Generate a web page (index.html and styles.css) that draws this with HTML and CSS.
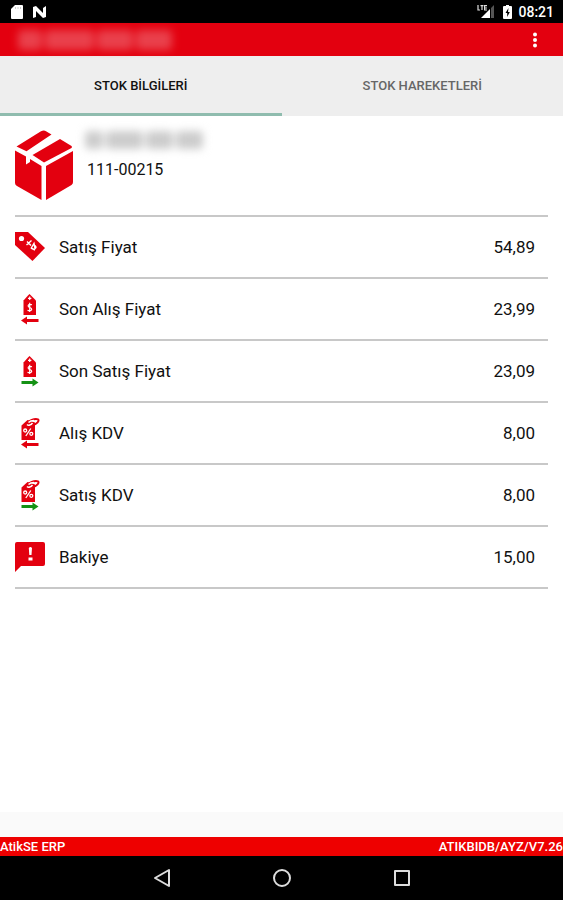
FILE: index.html
```html
<!DOCTYPE html>
<html lang="tr">
<head>
<meta charset="utf-8">
<meta name="viewport" content="width=device-width, initial-scale=1">
<title>Stok Bilgileri</title>
<link rel="stylesheet" href="styles.css">
</head>
<body>
<svg class="defs" aria-hidden="true">
  <symbol id="price-tag" viewBox="0 0 30 32">
    <path fill="#e3000f" d="M8.500 7.500 13 2.500 14.500 1l1.500 1.500 5 5V22h-12.500z"/>
    <path d="M14.700 3.500v3.600M13 5.300h3.400" stroke="#fff" stroke-width="1.200"/>
    <path d="M17 11.800c-4-1.300-5 1.700-2.300 2.700 3.200 1 2.500 4-2.200 2.800M14.700 9.800v9.200" fill="none" stroke="#fff" stroke-width="1.200"/>
  </symbol>
  <symbol id="tax-tag" viewBox="0 0 30 32">
    <path fill="#e3000f" d="M6.500 8.500 12.500 3l7.500 2.500V23H6.500z"/>
    <path d="M12 7c1-3.500 8-6 11-4.700 1.800 1.200-1 5-5.500 5.700" fill="none" stroke="#e3000f" stroke-width="2"/>
    <path d="M12 7.500c1.500 1.500 4 .5 5.500-1.500M13.500 5.500c1.500-1.500 3.500-2 5.500-2" fill="none" stroke="#fff" stroke-width="1.500"/>
    <circle cx="10.200" cy="13.500" r="1.500" fill="none" stroke="#fff" stroke-width="1.300"/>
    <circle cx="16.300" cy="16.800" r="1.500" fill="none" stroke="#fff" stroke-width="1.300"/>
    <path d="m15.800 11.500-5 7.500" stroke="#fff" stroke-width="1.300"/>
  </symbol>
  <symbol id="arrow-in" viewBox="0 0 30 32">
    <path fill="#e3000f" d="m6 27.500 6-4v2.500h11.500v3H12v2.500z"/>
  </symbol>
  <symbol id="arrow-out" viewBox="0 0 30 32">
    <path fill="#159215" d="m23.500 27.500-6-4v2.500H6.500v3h11v2.500z"/>
  </symbol>
</svg>

<header>
  <div class="status-bar">
    <svg width="14" height="16" viewBox="0 0 14 16" aria-hidden="true"><path fill="#fff" d="M5 1h7q1 0 1 1v12q0 1-1 1H2q-1 0-1-1V5z"/><path d="M5.500 3v2M8 3v2M10.500 3v2" stroke="#ccc"/></svg>
    <svg class="n-icon" width="16" height="14" viewBox="0 0 16 14" aria-hidden="true"><path fill="#fff" d="M1 13V2l3-1 7 7V3l3-2v11l-3 1-7-7v6z"/></svg>
    <span class="spacer"></span>
    <svg width="18" height="16" viewBox="0 0 18 16" aria-hidden="true"><path d="M1 1v5h2M3.500 1.600h3M5 1v5M10 1.600H7.600V6H10M8 4h2" fill="none" stroke="#ddd" stroke-width="1.200"/><path fill="#fff" d="M13 5v9H4z"/><path fill="#555" d="m14 4 3-3v13h-3z"/></svg>
    <svg class="battery" width="9" height="16" viewBox="0 0 9 16" aria-hidden="true"><path fill="#fff" d="M3 1h3v1h2q1 0 1 1v11q0 1-1 1H1q-1 0-1-1V3q0-1 1-1h2z"/><path fill="#000" d="M5.500 4 2.500 9h1.700v4L6.800 8H5z"/></svg>
    <time>08:21</time>
  </div>
  <div class="app-bar">
    <div class="masked masked-title"><i></i><i></i><i></i><i></i></div>
    <button class="more" aria-label="Menü"><svg width="6" height="18" viewBox="0 0 6 18"><g fill="#fff"><circle cx="3" cy="3.500" r="2"/><circle cx="3" cy="9" r="2"/><circle cx="3" cy="14.500" r="2"/></g></svg></button>
  </div>
  <nav class="tabs">
    <button class="tab active">STOK BİLGİLERİ</button>
    <button class="tab">STOK HAREKETLERİ</button>
  </nav>
</header>

<main>
  <section class="product">
    <svg width="60" height="72" viewBox="0 0 60 72" aria-hidden="true">
      <g fill="#e3000f">
        <path d="M1.500 17.500 26 2.300q3-1.800 5 0l5.500 3.200-25 16.700z"/>
        <path d="m45 10 11.500 7q1 1 0 2L29 33.500 17.500 26z"/>
        <path d="M0 21.500 11 27.500v8l4-2.500v-3L26.500 37v34L2 57Q0 56 0 54z"/>
        <path d="M31 37 58 22v31q0 2-1.500 3L31 71z"/>
      </g>
    </svg>
    <div class="product-text">
      <div class="masked masked-name"><i></i><i></i><i></i><i></i></div>
      <div class="code">111-00215</div>
    </div>
  </section>

  <dl class="rows">
    <div class="row">
      <dt><svg width="30" height="32" viewBox="0 0 30 32" aria-hidden="true"><path fill="#e3000f" d="M0 1h13l17 16-12.500 13L0 14z"/><circle cx="6.500" cy="7.500" r="2.600" fill="#fff"/><path d="m11.500 14 5-4.500M12 10.500l4 4M16 17.500l3-5 1 5q2-1 0-3M16 17l4 2" fill="none" stroke="#fff" stroke-width="1.400"/></svg>Satış Fiyat</dt>
      <dd>54,89</dd>
    </div>
    <div class="row">
      <dt><svg width="30" height="32" aria-hidden="true"><use href="#price-tag"/><use href="#arrow-in"/></svg>Son Alış Fiyat</dt>
      <dd>23,99</dd>
    </div>
    <div class="row">
      <dt><svg width="30" height="32" aria-hidden="true"><use href="#price-tag"/><use href="#arrow-out"/></svg>Son Satış Fiyat</dt>
      <dd>23,09</dd>
    </div>
    <div class="row">
      <dt><svg width="30" height="32" aria-hidden="true"><use href="#tax-tag"/><use href="#arrow-in"/></svg>Alış KDV</dt>
      <dd>8,00</dd>
    </div>
    <div class="row">
      <dt><svg width="30" height="32" aria-hidden="true"><use href="#tax-tag"/><use href="#arrow-out"/></svg>Satış KDV</dt>
      <dd>8,00</dd>
    </div>
    <div class="row">
      <dt><svg width="30" height="32" viewBox="0 0 30 32" aria-hidden="true"><path fill="#e3000f" d="M2 1h26q2 0 2 2v20q0 2-2 2H6l-6 6V3q0-2 2-2z"/><path fill="#fff" d="M13.800 7q1.700-2 3.200 0l-.5 7h-2.200zM13.500 16.500h4v3h-4z"/></svg>Bakiye</dt>
      <dd>15,00</dd>
    </div>
  </dl>
</main>

<footer>
  <div class="strip"></div>
  <div class="info"><span>AtikSE ERP</span><span>ATIKBIDB/AYZ/V7.26</span></div>
  <nav class="nav-bar">
    <button aria-label="Geri"><svg width="20" height="20" viewBox="0 0 20 20"><path d="M17 2v16L3 10z"/></svg></button>
    <button aria-label="Ana ekran"><svg width="20" height="20" viewBox="0 0 20 20"><circle cx="10" cy="10" r="8"/></svg></button>
    <button aria-label="Son uygulamalar"><svg width="20" height="20" viewBox="0 0 20 20"><path d="M3 3h14v14H3z"/></svg></button>
  </nav>
</footer>
</body>
</html>
```
FILE: styles.css
```css
* { box-sizing: border-box; }

body {
  margin: 0;
  min-height: 100vh;
  display: flex;
  flex-direction: column;
  background: #fff;
  color: #111;
  font: 17px/24px Roboto, sans-serif;
}

button {
  padding: 0;
  border: 0;
  background: none;
  color: inherit;
  font: inherit;
}

svg { display: block; flex: none; }
.defs { position: absolute; width: 0; height: 0; }

.status-bar {
  display: flex;
  align-items: center;
  height: 23px;
  padding: 0 9px 0 10px;
  background: #000;
  color: #fff;
  font-size: 14px;
  font-weight: 500;
}
.n-icon { margin-left: 8px; }
.spacer { flex: 1; }
.battery { margin: 0 6px 0 8px; }

.app-bar {
  display: flex;
  align-items: center;
  justify-content: space-between;
  height: 33px;
  padding: 0 16px 0 18px;
  background: #e3000f;
}
.more { padding: 0 9px; }

.masked { display: flex; gap: 3px; }
.masked i { border-radius: 4px; }
.masked i:nth-child(1) { flex: 2; }
.masked i:nth-child(2) { flex: 4; }
.masked i:nth-child(3) { flex: 3; }
.masked i:nth-child(4) { flex: 3; }
.masked-title { width: 154px; height: 20px; filter: blur(4px); }
.masked-title i { background: #e9404c; }
.masked-name { width: 118px; height: 18px; filter: blur(4px); }
.masked-name i { background: #ccc; }

.tabs { display: flex; height: 60px; background: #eee; }
.tab {
  flex: 1;
  border-bottom: 3px solid transparent;
  padding-top: 3px;
  color: #666;
  font-size: 13px;
  font-weight: 500;
}
.tab.active { border-color: #8fbcae; color: #111; }

main { flex: 1; padding: 0 15px; }

.product {
  display: flex;
  gap: 10px;
  height: 101px;
  padding-top: 13px;
  border-bottom: 2px solid #c8c8c8;
}
.product-text { padding-top: 2px; }
.code { padding: 9px 0 0 2px; font-size: 16px; }

.rows { margin: 0; }
.row {
  display: flex;
  align-items: center;
  justify-content: space-between;
  height: 62px;
  padding-right: 13px;
  border-bottom: 2px solid #c8c8c8;
}
dt { display: flex; align-items: center; gap: 14px; }
dd { margin: 0; }

.strip { height: 25px; background: #fafafa; }
.info {
  display: flex;
  justify-content: space-between;
  height: 19px;
  background: #ee0000;
  color: #fff;
  font-size: 13px;
  font-weight: 500;
  line-height: 19px;
}
.nav-bar {
  display: flex;
  align-items: center;
  justify-content: center;
  gap: 100px;
  height: 44px;
  background: #000;
}
.nav-bar svg {
  fill: none;
  stroke: #ddd;
  stroke-width: 2;
  stroke-linejoin: round;
}
```
